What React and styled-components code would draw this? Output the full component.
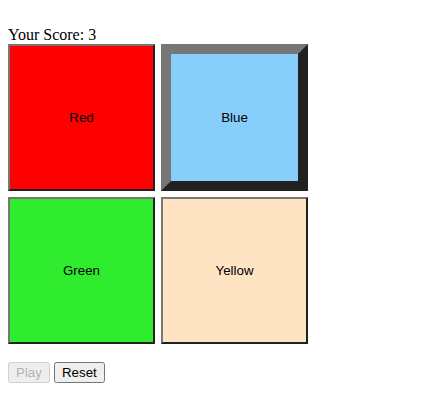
import React from "react";
import styled, { createGlobalStyle } from "styled-components";

const GlobalStyle = createGlobalStyle`
  body {
    margin: 8px;
    background: #fff;
    font-family: "Liberation Serif", "Times New Roman", serif;
    font-size: 16px;
  }
`;

const Score = styled.div`
  padding-top: 18px;
  line-height: 18px;
  color: #000;
`;

const Board = styled.div`
  display: grid;
  grid-template-columns: 147px 147px;
  grid-auto-rows: 147px;
  gap: 6px;
`;

const Pad = styled.button`
  box-sizing: border-box;
  width: 147px;
  height: 147px;
  margin: 0;
  padding: 0;
  background: ${(props) => props.color};
  border-style: solid;
  border-width: ${(props) => (props.lit ? "10px" : "2px")};
  border-color: #767676 #212121 #212121 #767676;
  font-family: "Liberation Sans", Arial, sans-serif;
  font-size: 13.333px;
  color: #000;
  cursor: pointer;
`;

const Controls = styled.div`
  display: flex;
  gap: 4px;
  margin-top: 18px;
`;

const Control = styled.button`
  font-family: "Liberation Sans", Arial, sans-serif;
  font-size: 13.333px;
`;

const pads = [
  { name: "Red", color: "#ff0000" },
  { name: "Blue", color: "#87cefa" },
  { name: "Green", color: "#2fec2f" },
  { name: "Yellow", color: "#ffe4c4" },
];

const App = () => {
  const [score] = React.useState(3);
  const [lit] = React.useState("Blue");

  return (
    <>
      <GlobalStyle />
      <Score>Your Score: {score}</Score>
      <Board>
        {pads.map((p) => (
          <Pad key={p.name} color={p.color} lit={p.name === lit ? 1 : 0}>
            {p.name}
          </Pad>
        ))}
      </Board>
      <Controls>
        <Control disabled>Play</Control>
        <Control>Reset</Control>
      </Controls>
    </>
  );
};

export default App;
